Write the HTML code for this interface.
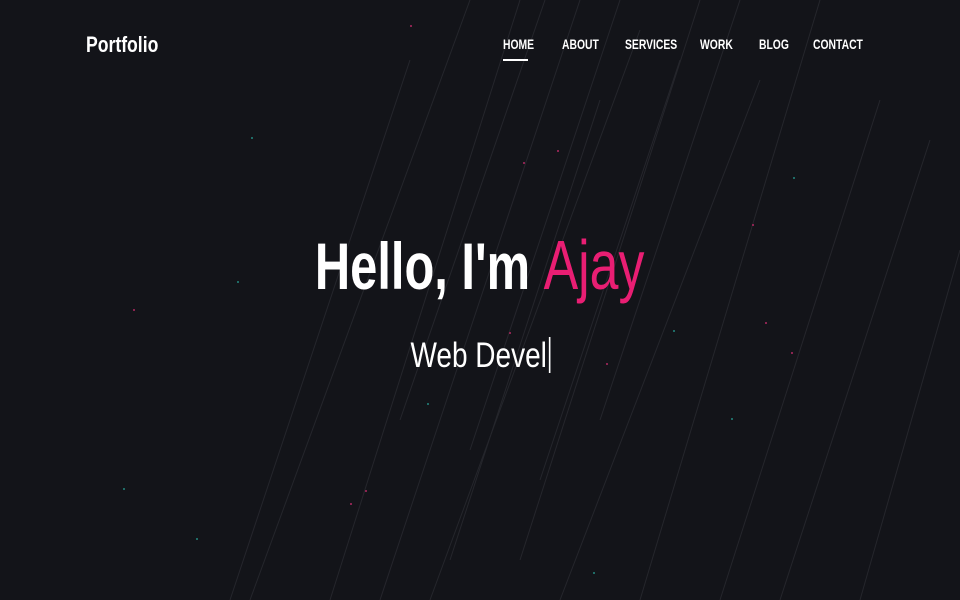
<!DOCTYPE html>
<html><head><meta charset="utf-8"><style>
body{margin:0;width:960px;height:600px;overflow:hidden;background:#131419;font-family:"Liberation Sans",sans-serif;color:#fff;position:relative}
.logo{position:absolute;left:86px;top:32px;font-size:22px;font-weight:bold;transform:scaleX(.8);transform-origin:left}
.nav a{position:absolute;top:36px;font-size:14px;font-weight:bold;color:#fff;transform:scaleX(.74);transform-origin:left;white-space:nowrap}
.ul{position:absolute;left:503px;top:59px;width:25px;height:2px;background:#fff}
.h{position:absolute;left:0;width:960px;text-align:center;white-space:nowrap}
.h1{top:225px;font-size:66px;font-weight:bold}
.h1 span{display:inline-block;transform:scaleX(.74)}
.h1 .a{color:#e91e73;transform:none;font-weight:normal;font-size:70px}
.h2{top:336px;font-size:35px;}
.h2 span{display:inline-block;transform:scaleX(.8)}
svg{position:absolute;left:0;top:0}
</style></head><body>
<svg width="960" height="600">
<g stroke="#25262c" stroke-width="1">
<line x1="470" y1="0" x2="250" y2="600"/><line x1="520" y1="0" x2="330" y2="600"/>
<line x1="580" y1="0" x2="380" y2="600"/><line x1="640" y1="30" x2="430" y2="600"/>
<line x1="700" y1="0" x2="520" y2="560"/><line x1="760" y1="80" x2="560" y2="600"/>
<line x1="820" y1="0" x2="640" y2="600"/><line x1="880" y1="100" x2="720" y2="600"/>
<line x1="930" y1="140" x2="780" y2="600"/><line x1="410" y1="60" x2="230" y2="600"/>
<line x1="620" y1="0" x2="470" y2="450"/><line x1="960" y1="250" x2="860" y2="600"/>
<line x1="545" y1="0" x2="400" y2="420"/><line x1="600" y1="100" x2="450" y2="560"/>
<line x1="680" y1="60" x2="540" y2="480"/><line x1="740" y1="0" x2="600" y2="420"/>
</g>
<g fill="#8a2450">
<rect x="410" y="25" width="2" height="2"/><rect x="523" y="162" width="2" height="2"/><rect x="557" y="150" width="2" height="2"/>
<rect x="133" y="309" width="2" height="2"/><rect x="752" y="224" width="2" height="2"/><rect x="765" y="322" width="2" height="2"/>
<rect x="791" y="352" width="2" height="2"/><rect x="365" y="490" width="2" height="2"/><rect x="350" y="503" width="2" height="2"/>
<rect x="606" y="363" width="2" height="2"/><rect x="509" y="332" width="2" height="2"/>
</g>
<g fill="#1f6b66">
<rect x="251" y="137" width="2" height="2"/><rect x="237" y="281" width="2" height="2"/><rect x="673" y="330" width="2" height="2"/>
<rect x="731" y="418" width="2" height="2"/><rect x="123" y="488" width="2" height="2"/><rect x="196" y="538" width="2" height="2"/>
<rect x="593" y="572" width="2" height="2"/><rect x="427" y="403" width="2" height="2"/><rect x="793" y="177" width="2" height="2"/>
</g>
</svg>
<div class="logo">Portfolio</div>
<div class="nav">
<a style="left:503px">HOME</a><a style="left:562px">ABOUT</a><a style="left:625px">SERVICES</a>
<a style="left:700px">WORK</a><a style="left:759px">BLOG</a><a style="left:813px">CONTACT</a>
</div>
<div class="ul"></div>
<div class="h h1"><span>Hello, I'm <span class="a">Ajay</span></span></div>
<div class="h h2"><span>Web Devel<span style="display:inline-block;width:2px;height:36px;background:#fff;vertical-align:-6px;margin-left:2px;transform:none"></span></span></div>
</body></html>
